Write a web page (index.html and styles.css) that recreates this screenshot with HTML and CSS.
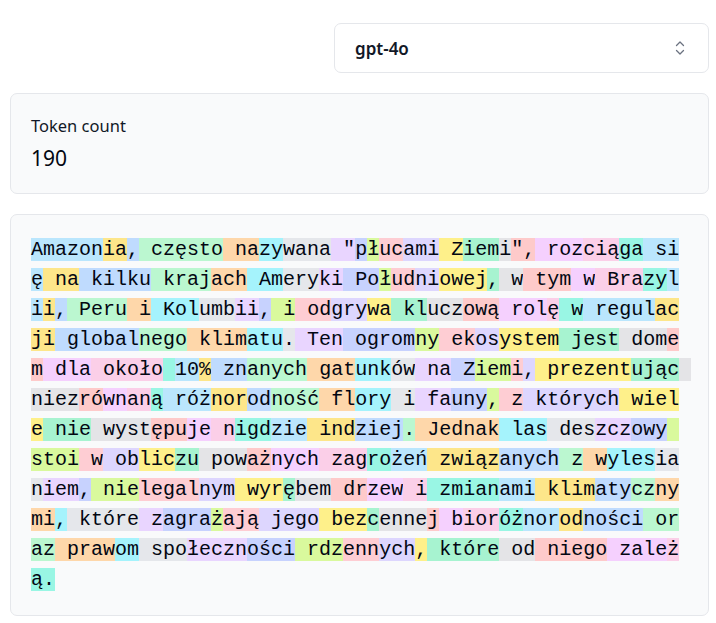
FILE: index.html
```html
<!DOCTYPE html>
<html lang="pl">
<head>
<meta charset="utf-8">
<title>Tokenizer</title>
<link rel="stylesheet" href="styles.css">
</head>
<body>
<div class="page">
  <div class="toolbar">
    <div class="select">
      <span class="select-value">gpt-4o</span>
      <svg class="select-icon" width="16" height="18" viewBox="0 0 16 18" fill="none" stroke="#6b7280" stroke-width="1.3" stroke-linecap="round" stroke-linejoin="round"><path d="M4.5 6.5 L8 3 L11.5 6.5"/><path d="M4.5 11.5 L8 15 L11.5 11.5"/></svg>
    </div>
  </div>
  <div class="card stat">
    <div class="stat-label">Token count</div>
    <div class="stat-value">190</div>
  </div>
  <div class="card tokens"><pre class="token-text"><span class="t0">Amazon</span><span class="t1">ia</span><span class="t2">,</span><span class="t3"> często</span><span class="t4"> na</span><span class="t5">zy</span><span class="t6">wana</span><span class="t7"> "</span><span class="t8">p</span><span class="t9">ł</span><span class="t10">uc</span><span class="t11">ami</span><span class="t12"> Z</span><span class="t13">iem</span><span class="t14">i</span><span class="t15">",</span><span class="t16"> roz</span><span class="t17">cią</span><span class="t18">ga</span><span class="t0"> się</span><span class="t1"> na</span><span class="t2"> kilku</span><span class="t3"> kraj</span><span class="t4">ach</span><span class="t5"> Am</span><span class="t6">ery</span><span class="t7">ki</span><span class="t8"> Po</span><span class="t9">ł</span><span class="t10">ud</span><span class="t11">ni</span><span class="t12">owej</span><span class="t13">,</span><span class="t14"> w</span><span class="t15"> tym</span><span class="t16"> w</span><span class="t17"> Bra</span><span class="t18">zy</span><span class="t0">li</span><span class="t1">i</span><span class="t2">,</span><span class="t3"> Peru</span><span class="t4"> i</span><span class="t5"> Kol</span><span class="t6">umb</span><span class="t7">ii</span><span class="t8">,</span><span class="t9"> i</span><span class="t10"> od</span><span class="t11">gry</span><span class="t12">wa</span><span class="t13"> kl</span><span class="t14">ucz</span><span class="t15">ową</span><span class="t16"> rol</span><span class="t17">ę</span><span class="t18"> w</span><span class="t0"> regul</span><span class="t1">acji</span><span class="t2"> global</span><span class="t3">nego</span><span class="t4"> klim</span><span class="t5">atu</span><span class="t6">.</span><span class="t7"> Ten</span><span class="t8"> ogrom</span><span class="t9">ny</span><span class="t10"> ek</span><span class="t11">os</span><span class="t12">ystem</span><span class="t13"> jest</span><span class="t14"> dom</span><span class="t15">em</span><span class="t16"> dla</span><span class="t17"> około</span><span class="t18"> </span><span class="t0">10</span><span class="t1">%</span><span class="t2"> zn</span><span class="t3">anych</span><span class="t4"> gat</span><span class="t5">unk</span><span class="t6">ów</span><span class="t7"> na</span><span class="t8"> Z</span><span class="t9">iem</span><span class="t10">i</span><span class="t11">,</span><span class="t12"> prezent</span><span class="t13">ując</span><span class="t14"> niez</span><span class="t15">ró</span><span class="t16">wn</span><span class="t17">an</span><span class="t18">ą</span><span class="t0"> róż</span><span class="t1">nor</span><span class="t2">od</span><span class="t3">ność</span><span class="t4"> fl</span><span class="t5">ory</span><span class="t6"> i</span><span class="t7"> fa</span><span class="t8">uny</span><span class="t9">,</span><span class="t10"> z</span><span class="t11"> których</span><span class="t12"> wiele</span><span class="t13"> nie</span><span class="t14"> wyst</span><span class="t15">ępu</span><span class="t16">je</span><span class="t17"> n</span><span class="t18">igd</span><span class="t0">zie</span><span class="t1"> ind</span><span class="t2">ziej</span><span class="t3">.</span><span class="t4"> Jednak</span><span class="t5"> las</span><span class="t6"> des</span><span class="t7">zcz</span><span class="t8">owy</span><span class="t9"> stoi</span><span class="t10"> w</span><span class="t11"> ob</span><span class="t12">lic</span><span class="t13">zu</span><span class="t14"> pow</span><span class="t15">aż</span><span class="t16">nych</span><span class="t17"> zag</span><span class="t18">ro</span><span class="t0">żeń</span><span class="t1"> związ</span><span class="t2">anych</span><span class="t3"> z</span><span class="t4"> w</span><span class="t5">yles</span><span class="t6">ian</span><span class="t7">iem</span><span class="t8">,</span><span class="t9"> nie</span><span class="t10">legal</span><span class="t11">nym</span><span class="t12"> wyr</span><span class="t13">ę</span><span class="t14">bem</span><span class="t15"> dr</span><span class="t16">zew</span><span class="t17"> i</span><span class="t18"> zmian</span><span class="t0">ami</span><span class="t1"> klim</span><span class="t2">aty</span><span class="t3">cz</span><span class="t4">nymi</span><span class="t5">,</span><span class="t6"> które</span><span class="t7"> z</span><span class="t8">agra</span><span class="t9">ż</span><span class="t10">ają</span><span class="t11"> jego</span><span class="t12"> bez</span><span class="t13">c</span><span class="t14">enne</span><span class="t15">j</span><span class="t16"> b</span><span class="t17">ior</span><span class="t18">óż</span><span class="t0">nor</span><span class="t1">od</span><span class="t2">ności</span><span class="t3"> oraz</span><span class="t4"> praw</span><span class="t5">om</span><span class="t6"> spo</span><span class="t7">łeczn</span><span class="t8">ości</span><span class="t9"> rdz</span><span class="t10">enn</span><span class="t11">ych</span><span class="t12">,</span><span class="t13"> które</span><span class="t14"> od</span><span class="t15"> niego</span><span class="t16"> zale</span><span class="t17">ż</span><span class="t18">ą.</span></pre></div>
</div>
</body>
</html>
```

FILE: styles.css
```css
* {
  box-sizing: border-box;
}

html, body {
  margin: 0;
  padding: 0;
  background: #ffffff;
}

body {
  font-family: "Noto Sans", "Open Sans", sans-serif;
  color: #030712;
}

.page {
  display: flex;
  flex-direction: column;
  gap: 20px;
  padding: 23px 7px 20px 10px;
}

.toolbar {
  display: flex;
  justify-content: flex-end;
}

.select {
  width: 375px;
  height: 50px;
  display: flex;
  align-items: center;
  justify-content: space-between;
  padding: 0 20px 0 20px;
  border: 1px solid #e5e7eb;
  border-radius: 7px;
  background: #ffffff;
}

.select-value {
  font-size: 17px;
  font-weight: 600;
  color: #111827;
}

.select-icon {
  display: block;
}

.card {
  border: 1px solid #e5e7eb;
  border-radius: 7px;
  background: #f9fafb;
  padding: 20px;
}

.stat {
  display: flex;
  flex-direction: column;
  gap: 5px;
  height: 101px;
}

.stat-label {
  font-size: 16.5px;
  line-height: 24px;
  color: #111827;
}

.stat-value {
  font-size: 21px;
  line-height: 30px;
  color: #030712;
}

.token-text {
  margin: 0;
  font-family: "Liberation Mono", "DejaVu Sans Mono", monospace;
  font-size: 20px;
  line-height: 30px;
  white-space: pre-wrap;
  word-break: break-all;
  color: #030712;
}

.t0 { background: #bae6fd; }
.t1 { background: #fde68a; }
.t2 { background: #bfdbfe; }
.t3 { background: #bbf7d0; }
.t4 { background: #fed7aa; }
.t5 { background: #a5f3fc; }
.t6 { background: #e5e7eb; }
.t7 { background: #e9d5ff; }
.t8 { background: #c7d2fe; }
.t9 { background: #d9f99d; }
.t10 { background: #fecdd3; }
.t11 { background: #ddd6fe; }
.t12 { background: #fef08a; }
.t13 { background: #a7f3d0; }
.t14 { background: #e4e4e7; }
.t15 { background: #fecaca; }
.t16 { background: #f5d0fe; }
.t17 { background: #fbcfe8; }
.t18 { background: #99f6e4; }
```
